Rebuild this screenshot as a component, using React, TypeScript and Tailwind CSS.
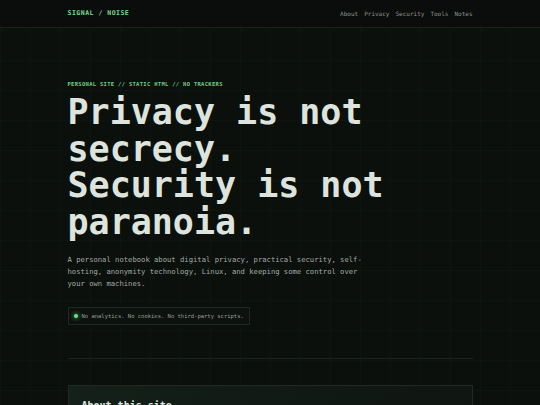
export default function App() {
  const nav = ["About", "Privacy", "Security", "Tools", "Notes"];

  return (
    <div
      className="min-h-screen bg-[#0b100d] text-[#dfe6df] overflow-hidden"
      style={{
        fontFamily: '"DejaVu Sans Mono", "Liberation Mono", monospace',
        backgroundImage:
          "linear-gradient(to right, rgba(120,200,140,0.022) 1px, transparent 1px), linear-gradient(to bottom, rgba(120,200,140,0.022) 1px, transparent 1px)",
        backgroundSize: "30px 30px",
      }}
    >
      <header className="h-[28px] bg-[#0b0d0c] border-b border-[#1a211c]">
        <div className="mx-auto w-[405px] h-full flex items-center justify-between">
          <span className="text-[6.5px] font-bold tracking-[0.5px] text-[#7fdc8e]">
            SIGNAL / NOISE
          </span>
          <nav className="flex gap-[6px] text-[6px] text-[#8b918c]">
            {nav.map((n) => (
              <span key={n}>{n}</span>
            ))}
          </nav>
        </div>
      </header>

      <main className="mx-auto w-[405px]">
        <section className="pt-[52px]">
          <p className="text-[5.5px] font-bold tracking-[0.3px] text-[#6fcb80]">
            PERSONAL SITE // STATIC HTML // NO TRACKERS
          </p>
          <h1 className="mt-[6px] text-[35px] leading-[36.5px] font-bold text-[#dde4dd]">
            Privacy is not
            <br />
            secrecy.
            <br />
            Security is not
            <br />
            paranoia.
          </h1>
          <p className="mt-[14px] w-[306px] text-[7.2px] leading-[12px] text-[#a3a9a4]">
            A personal notebook about digital privacy, practical security, self-hosting,
            anonymity technology, Linux, and keeping some control over your own machines.
          </p>
          <div className="mt-[17px] inline-flex items-center gap-[4px] h-[18px] px-[5px] border border-[#1f2822] bg-[#0d120f] text-[5.5px] text-[#969e97]">
            <span className="w-[4px] h-[4px] rounded-full bg-[#6fe383] shadow-[0_0_4px_#6fe383]" />
            No analytics. No cookies. No third-party scripts.
          </div>
        </section>

        <div className="mt-[33px] border-t border-[#1c231e]" />

        <section className="mt-[26px] border border-[#1f2a23] bg-gradient-to-r from-[#142019] via-[#111a15] to-[#0f1612] px-[13px] pt-[12px] pb-[20px]">
          <h2 className="text-[10px] font-bold text-[#dfe6df]">About this site</h2>
        </section>
      </main>
    </div>
  );
}
